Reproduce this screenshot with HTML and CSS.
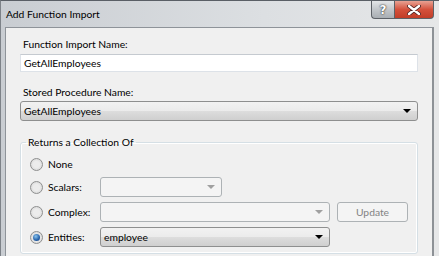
FILE: index.html
```html
<!DOCTYPE html>
<html lang="en">
<head>
<meta charset="UTF-8">
<title>Add Function Import</title>
<link rel="stylesheet" href="styles.css">
</head>
<body>
    <div class="window">
        <div class="titlebar">
            <span class="title">Add Function Import</span>
            <div class="caption">
                <span class="btn-help">?</span>
                <span class="btn-close">
                    <svg width="14" height="10" viewBox="0 0 14 10">
                        <path d="M2 1 L12 9 M12 1 L2 9" stroke="#4a2020" stroke-width="4" stroke-linecap="round"/>
                        <path d="M2 1 L12 9 M12 1 L2 9" stroke="#fff" stroke-width="2.4" stroke-linecap="round"/>
                    </svg>
                </span>
            </div>
        </div>
        <div class="client">
            <label class="field-label">Function Import Name:</label>
            <div class="textbox">GetAllEmployees</div>
            <label class="field-label second">Stored Procedure Name:</label>
            <div class="combo">
                <span>GetAllEmployees</span>
                <span class="arrow"></span>
            </div>
            <fieldset class="group">
                <legend>Returns a Collection Of</legend>
                <div class="rows">
                    <div class="row none">
                        <span class="radio"></span>
                        <span class="row-label">None</span>
                    </div>
                    <div class="row">
                        <span class="radio"></span>
                        <span class="row-label">Scalars:</span>
                        <div class="combo disabled short"><span></span><span class="arrow"></span></div>
                    </div>
                    <div class="row">
                        <span class="radio"></span>
                        <span class="row-label">Complex:</span>
                        <div class="combo disabled wide"><span></span><span class="arrow"></span></div>
                        <div class="button disabled">Update</div>
                    </div>
                    <div class="row">
                        <span class="radio checked"></span>
                        <span class="row-label">Entities:</span>
                        <div class="combo wide"><span>employee</span><span class="arrow"></span></div>
                    </div>
                </div>
            </fieldset>
        </div>
    </div>
</body>
</html>
```

FILE: styles.css
```css
body {
    margin: 0;
    padding: 0;
    font-family: 'Lato', 'Noto Sans', sans-serif;
    font-size: 10.3px;
    color: #000;
    overflow: hidden;
}
.window {
    width: 439px;
    height: 256px;
    box-sizing: border-box;
    border-top: 1px solid #5a5f66;
    border-left: 1px solid #7d8288;
    background: linear-gradient(to right, #c9cdd2, #dcdfe2 60%, #e6e7e8);
    display: flex;
    flex-direction: column;
    overflow: hidden;
}
.titlebar {
    height: 26px;
    display: flex;
    justify-content: space-between;
    align-items: flex-start;
    padding-left: 5px;
    padding-right: 5px;
}
.title {
    margin-top: 6px;
    line-height: 15px;
}
.caption {
    display: flex;
    height: 18px;
}
.btn-help, .btn-close {
    display: flex;
    align-items: center;
    justify-content: center;
    box-sizing: border-box;
    height: 18px;
    border: 1px solid #5d6167;
    border-top: none;
}
.btn-help {
    width: 23px;
    border-right: none;
    border-bottom-left-radius: 4px;
    background: linear-gradient(#e4e6e8, #c2c6ca 50%, #a9aeb3);
    color: #fff;
    font-family: 'DejaVu Sans', sans-serif;
    font-weight: bold;
    font-size: 12px;
    text-shadow: 0 0 2px #333, 0 0 1px #333;
}
.btn-close {
    width: 40px;
    border-bottom-right-radius: 4px;
    background: linear-gradient(#e8a293, #d4513c 50%, #c23d28);
}
.client {
    flex: 1;
    margin-left: 4px;
    margin-right: 5px;
    background: #f0f0f0;
    border-top: 1px solid #8e9399;
    border-left: 1px solid #8e9399;
    border-right: 2px solid #8d9196;
    padding: 9px 14px 0 14px;
    display: flex;
    flex-direction: column;
}
.field-label {
    line-height: 15px;
    padding-left: 3px;
}
.field-label.second {
    margin-top: 13px;
}
.textbox {
    margin-top: 2px;
    height: 18px;
    box-sizing: border-box;
    background: #fff;
    border: 1px solid #dde2e8;
    border-top-color: #c5cad0;
    padding-left: 3px;
    line-height: 16px;
}
.combo {
    margin-top: 1px;
    height: 20px;
    box-sizing: border-box;
    border: 1px solid #8e8f8f;
    border-radius: 3px;
    background: linear-gradient(#f2f2f2, #ebebeb 50%, #dddddd 51%, #cfcfcf);
    padding: 0 6px 0 3px;
    display: flex;
    align-items: center;
    justify-content: space-between;
    line-height: 16px;
}
.arrow {
    width: 0;
    height: 0;
    border-left: 4px solid transparent;
    border-right: 4px solid transparent;
    border-top: 4px solid #000;
}
.combo.disabled {
    background: #f4f4f4;
    border-color: #adb2b5;
}
.combo.disabled .arrow {
    border-top-color: #a0a0a0;
}
.group {
    margin: 14px 0 0 0;
    padding: 0 0 6px 9px;
    border: 1px solid #d5dfe5;
    border-radius: 3px;
    box-shadow: inset 0 0 0 1px #fff;
}
.group legend {
    margin-left: -4px;
    padding: 0 2px;
    line-height: 15px;
}
.rows {
    display: flex;
    flex-direction: column;
    gap: 5px;
    padding-top: 6px;
}
.row {
    display: flex;
    align-items: center;
    height: 20px;
}
.row.none {
    height: 16px;
}
.radio {
    width: 13px;
    height: 13px;
    box-sizing: border-box;
    border-radius: 50%;
    border: 1px solid #8e8f8f;
    background: radial-gradient(circle at 50% 50%, #ececec 40%, #d4d4d4 90%);
    display: flex;
    align-items: center;
    justify-content: center;
}
.radio.checked::after {
    content: '';
    width: 7px;
    height: 7px;
    border-radius: 50%;
    background: radial-gradient(circle at 40% 35%, #8ac4ee, #2460a8 60%, #173f78);
}
.row-label {
    width: 52px;
    margin-left: 5px;
}
.row .combo {
    margin-top: 0;
}
.combo.short {
    width: 122px;
}
.combo.wide {
    width: 230px;
}
.button {
    margin-left: 7px;
    width: 71px;
    height: 20px;
    box-sizing: border-box;
    border: 1px solid #adb2b5;
    border-radius: 3px;
    background: #f4f4f4;
    color: #838383;
    display: flex;
    align-items: center;
    justify-content: center;
}
```
